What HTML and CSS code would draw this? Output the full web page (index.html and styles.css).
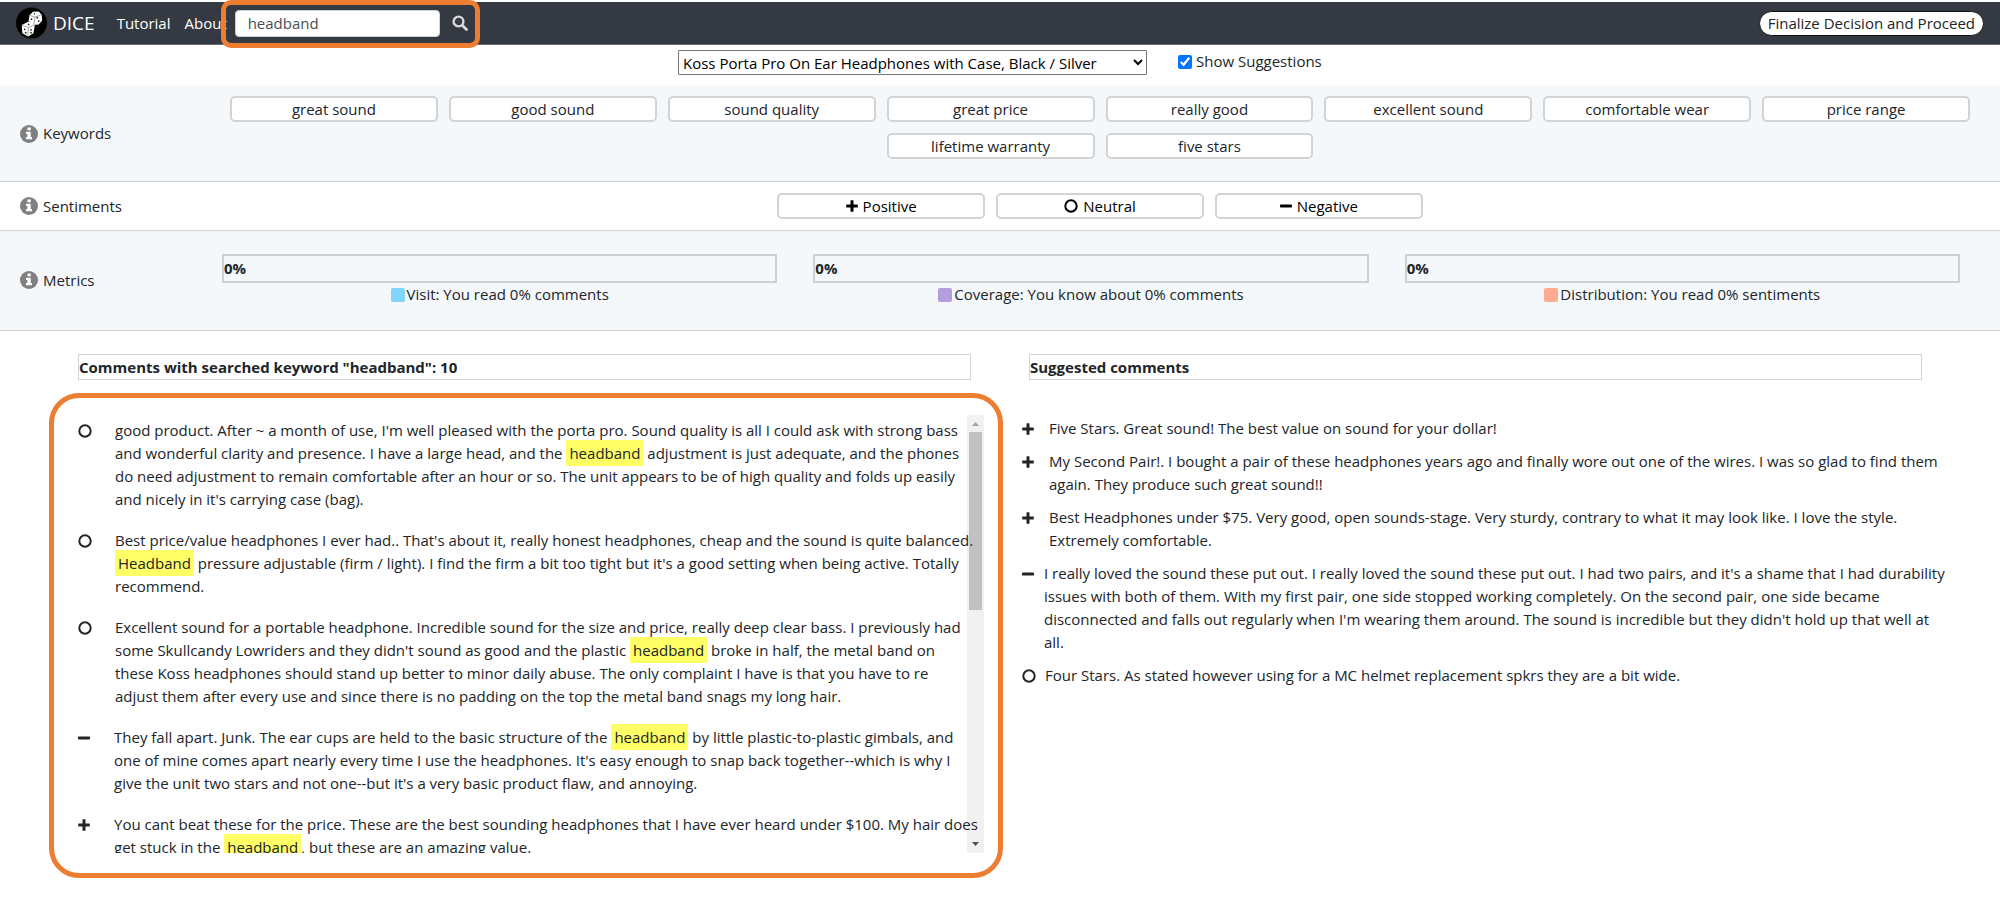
FILE: index.html
```
<!DOCTYPE html>
<html lang="en">
<head>
<meta charset="utf-8">
<title>DICE</title>
<link rel="stylesheet" href="styles.css">
</head>
<body>
<svg class="sprite" aria-hidden="true">
  <symbol id="plus" viewBox="0 0 12 12"><path d="M4.500 .8q0-.6.6-.6h1.800q.6 0 .6.6v3.700h3.700q.6 0 .6.6v1.800q0 .6-.6.6H7.500v3.700q0 .6-.6.6H5.100q-.6 0-.6-.6V7.500H.8q-.6 0-.6-.6V5.100q0-.6.6-.6h3.700z"/></symbol>
  <symbol id="minus" viewBox="0 0 12 12"><rect y="4.500" width="12" height="3" rx=".8"/></symbol>
  <symbol id="circle" viewBox="0 0 14 14"><circle cx="7" cy="7" r="5.700" fill="none" stroke="currentColor" stroke-width="2"/></symbol>
  <symbol id="info" viewBox="0 0 18 18"><circle cx="9" cy="9" r="9"/><path fill="#fff" d="M7.500 2.500h3.200v2.700H7.500zM6 6.800h4.700v5.200H12v2.200H6V12h1.400V8.900H6z"/></symbol>
</svg>

<header class="navbar">
  <a class="brand" href="#">
    <svg class="brand-logo" viewBox="0 0 32 32" aria-hidden="true">
      <circle cx="16" cy="16" r="16"/>
      <path fill="#fff" d="M14 8l3.500-3.500 6-.5 3 3.500.5 6-3.500 4-6 .5-4.500-4z"/>
      <path fill="#fff" d="M6 18l7-3.500 6.500 3-1.500 9-5.500 3.500-6-3.500z"/>
      <path fill="none" stroke="#888" stroke-width=".8" d="M14 8l5.500 2 6.500-2.500M19.500 10l-1 7.500M6 18l7 2.800 6-3.300M13 20.800L12 29"/>
      <g fill="#222"><circle cx="16" cy="12" r=".9"/><circle cx="22" cy="10.500" r=".9"/><circle cx="23.500" cy="14" r=".9"/><circle cx="19" cy="6.500" r=".8"/><circle cx="9" cy="22.500" r=".9"/><circle cx="10" cy="26" r=".9"/><circle cx="15.500" cy="23" r=".9"/><circle cx="15.500" cy="26" r=".9"/><circle cx="13" cy="17.500" r=".9"/></g>
    </svg>
    DICE
  </a>
  <nav class="nav-links">
    <a href="#">Tutorial</a>
    <a href="#">About</a>
  </nav>
  <form class="search">
    <input class="search-box" type="text" value="headband" aria-label="Search comments">
    <button class="search-button" type="button" aria-label="Search">
      <svg viewBox="0 0 16 16" aria-hidden="true"><circle cx="6.500" cy="6.500" r="4.900" fill="none" stroke="currentColor" stroke-width="2.400"/><path d="M10.200 10.200l4.300 4.300" stroke="currentColor" stroke-width="2.800" stroke-linecap="round"/></svg>
    </button>
  </form>
  <button class="finalize" type="button">Finalize Decision and Proceed</button>
</header>

<div class="product-bar">
  <select class="product" aria-label="Product">
    <option>Koss Porta Pro On Ear Headphones with Case, Black / Silver</option>
  </select>
  <label class="toggle"><input type="checkbox" checked>Show Suggestions</label>
</div>

<section class="panel panel-keywords">
  <h2 class="panel-label"><svg class="info"><use href="#info"/></svg>Keywords</h2>
  <div class="chips">
    <button class="chip" type="button">great sound</button>
    <button class="chip" type="button">good sound</button>
    <button class="chip" type="button">sound quality</button>
    <button class="chip" type="button">great price</button>
    <button class="chip" type="button">really good</button>
    <button class="chip" type="button">excellent sound</button>
    <button class="chip" type="button">comfortable wear</button>
    <button class="chip" type="button">price range</button>
    <button class="chip" type="button">lifetime warranty</button>
    <button class="chip" type="button">five stars</button>
  </div>
</section>

<section class="panel panel-sentiments">
  <h2 class="panel-label"><svg class="info"><use href="#info"/></svg>Sentiments</h2>
  <div class="chips">
    <button class="chip chip-dark" type="button"><svg class="mark"><use href="#plus"/></svg>Positive</button>
    <button class="chip chip-dark" type="button"><svg class="mark mark-circle"><use href="#circle"/></svg>Neutral</button>
    <button class="chip chip-dark" type="button"><svg class="mark"><use href="#minus"/></svg>Negative</button>
  </div>
</section>

<section class="panel panel-metrics">
  <h2 class="panel-label"><svg class="info"><use href="#info"/></svg>Metrics</h2>
  <div class="metrics">
    <div class="metric"><div class="meter">0%</div><p class="legend"><span class="swatch swatch-visit"></span>Visit: You read 0% comments</p></div>
    <div class="metric"><div class="meter">0%</div><p class="legend"><span class="swatch swatch-coverage"></span>Coverage: You know about 0% comments</p></div>
    <div class="metric"><div class="meter">0%</div><p class="legend"><span class="swatch swatch-distribution"></span>Distribution: You read 0% sentiments</p></div>
  </div>
</section>

<main class="columns">
  <section class="column">
    <h2 class="column-title">Comments with searched keyword "headband": 10</h2>
    <div class="callout">
      <div class="scroll-area">
        <div class="scrollbar" aria-hidden="true">
          <svg class="arrow arrow-up" viewBox="0 0 17 17"><path d="M5 11l3.500-4 3.500 4z"/></svg>
          <div class="track"><div class="thumb"></div></div>
          <svg class="arrow" viewBox="0 0 17 17"><path d="M5 6l3.500 4L12 6z"/></svg>
        </div>
        <ul class="results">
          <li class="comment"><svg class="mark mark-circle"><use href="#circle"/></svg><p>good product. After ~ a month of use, I'm well pleased with the porta pro. Sound quality is all I could ask with strong bass<br>and wonderful clarity and presence. I have a large head, and the <mark>headband</mark> adjustment is just adequate, and the phones<br>do need adjustment to remain comfortable after an hour or so. The unit appears to be of high quality and folds up easily<br>and nicely in it's carrying case (bag).</p></li>
          <li class="comment"><svg class="mark mark-circle"><use href="#circle"/></svg><p>Best price/value headphones I ever had.. That's about it, really honest headphones, cheap and the sound is quite balanced.<br><mark>Headband</mark> pressure adjustable (firm / light). I find the firm a bit too tight but it's a good setting when being active. Totally<br>recommend.</p></li>
          <li class="comment"><svg class="mark mark-circle"><use href="#circle"/></svg><p>Excellent sound for a portable headphone. Incredible sound for the size and price, really deep clear bass. I previously had<br>some Skullcandy Lowriders and they didn't sound as good and the plastic <mark>headband</mark> broke in half, the metal band on<br>these Koss headphones should stand up better to minor daily abuse. The only complaint I have is that you have to re<br>adjust them after every use and since there is no padding on the top the metal band snags my long hair.</p></li>
          <li class="comment"><svg class="mark"><use href="#minus"/></svg><p>They fall apart. Junk. The ear cups are held to the basic structure of the <mark>headband</mark> by little plastic-to-plastic gimbals, and<br>one of mine comes apart nearly every time I use the headphones. It's easy enough to snap back together--which is why I<br>give the unit two stars and not one--but it's a very basic product flaw, and annoying.</p></li>
          <li class="comment"><svg class="mark"><use href="#plus"/></svg><p>You cant beat these for the price. These are the best sounding headphones that I have ever heard under $100. My hair does<br>get stuck in the <mark>headband</mark>, but these are an amazing value.</p></li>
        </ul>
      </div>
    </div>
  </section>
  <section class="column">
    <h2 class="column-title">Suggested comments</h2>
    <ul class="suggestions">
      <li class="comment"><svg class="mark"><use href="#plus"/></svg><p>Five Stars. Great sound! The best value on sound for your dollar!</p></li>
      <li class="comment"><svg class="mark"><use href="#plus"/></svg><p>My Second Pair!. I bought a pair of these headphones years ago and finally wore out one of the wires. I was so glad to find them<br>again. They produce such great sound!!</p></li>
      <li class="comment"><svg class="mark"><use href="#plus"/></svg><p>Best Headphones under $75. Very good, open sounds-stage. Very sturdy, contrary to what it may look like. I love the style.<br>Extremely comfortable.</p></li>
      <li class="comment comment-tight"><svg class="mark"><use href="#minus"/></svg><p>I really loved the sound these put out. I really loved the sound these put out. I had two pairs, and it's a shame that I had durability<br>issues with both of them. With my first pair, one side stopped working completely. On the second pair, one side became<br>disconnected and falls out regularly when I'm wearing them around. The sound is incredible but they didn't hold up that well at<br>all.</p></li>
      <li class="comment comment-tight"><svg class="mark mark-circle"><use href="#circle"/></svg><p>Four Stars. As stated however using for a MC helmet replacement spkrs they are a bit wide.</p></li>
    </ul>
  </section>
</main>
</body>
</html>
```
FILE: styles.css
```
* { box-sizing: border-box; }
body {
  margin: 0;
  padding-top: 2px;
  background: #fff;
  color: #212529;
  font: 15px/23px "Segoe UI", "Open Sans", "Noto Sans", sans-serif;
}
h2, p, ul { margin: 0; padding: 0; font-size: inherit; }
ul { list-style: none; }
button, input, select { font: inherit; color: inherit; }
.sprite { position: absolute; width: 0; height: 0; }

.navbar {
  display: flex;
  align-items: center;
  height: 43px;
  padding: 0 16px;
  background: #353a42;
  border-bottom: 1px solid #6b6f75;
}
.brand { display: flex; align-items: center; gap: 6px; color: #fff; font-size: 19px; text-decoration: none; }
.brand-logo { width: 31px; height: 32px; }
.nav-links { display: flex; gap: 14px; margin-left: 22px; width: 118px; white-space: nowrap; }
.nav-links a { color: #fff; text-decoration: none; }
.search { position: relative; display: flex; align-items: center; gap: 12px; }
.search::after {
  content: "";
  position: absolute;
  inset: -10px -12px -11px -14px;
  border: 5px solid #ed7d31;
  border-radius: 10px;
  pointer-events: none;
}
.search-box {
  width: 205px;
  height: 27px;
  padding: 0 12px;
  border: 1px solid #ced4da;
  border-radius: 4px;
  background: #fff;
  color: #495057;
}
.search-button { display: flex; padding: 0; border: 0; background: none; color: #d8dadd; }
.search-button svg { width: 16px; height: 16px; }
.finalize {
  margin-left: auto;
  height: 25px;
  padding: 0 8px;
  border: 1px solid #111;
  border-radius: 13px;
  background: #fff;
  line-height: 22px;
}

.product-bar { display: flex; gap: 31px; align-items: flex-start; height: 40px; padding: 5px 0 0 33.9%; }
.product { width: 469px; height: 25px; padding: 0; border: 1px solid #767676; border-radius: 1px; background: #fff; color: #000; }
.toggle { display: flex; align-items: center; gap: 4px; }
.toggle input { width: 14px; height: 14px; margin: 0; accent-color: #0075ff; }

.panel { display: grid; grid-template-columns: 222px 1fr; align-items: center; border-bottom: 1px solid #d0d3d5; }
.panel-label { display: flex; align-items: center; gap: 5px; padding-left: 20px; font-weight: 400; }
.info { width: 18px; height: 18px; fill: #808080; }
.panel-keywords { padding: 11px 30px 22px 0; background: #f4f8fb; }
.panel-keywords .panel-label { padding-top: 12px; }
.panel-sentiments { padding: 11px 30px 11px 0; }
.panel-metrics { padding: 23px 40px 24px 0; background: #f4f8fb; }
.chips { display: flex; flex-wrap: wrap; justify-content: center; gap: 11px; padding-left: 8px; }
.chip {
  display: flex;
  align-items: center;
  justify-content: center;
  gap: 5px;
  width: calc((100% - 77px) / 8);
  height: 26px;
  padding: 0;
  border: 2px solid #d3d3d3;
  border-radius: 5px;
  background: #fff;
  line-height: 22px;
}
.chip-dark { color: #000; }
.mark { flex: none; width: 12px; height: 12px; fill: currentColor; }
.mark-circle { width: 14px; height: 14px; }

.metrics { display: grid; grid-template-columns: repeat(3, 1fr); gap: 36px; }
.meter { height: 29px; border: 2px solid #d0d0d0; font-weight: 700; line-height: 24px; }
.legend { display: flex; align-items: center; justify-content: center; gap: 2px; }
.swatch { width: 14px; height: 14px; border-radius: 2px; }
.swatch-visit { background: #81d4fa; }
.swatch-coverage { background: #b39ddb; }
.swatch-distribution { background: #ffab91; }

.columns { display: grid; grid-template-columns: 1fr 1fr; gap: 58px; padding: 23px 78px 0; }
.column { min-width: 0; }
.column-title { height: 26px; border: 1px solid #d3d3d3; font-weight: 700; line-height: 24px; }
.callout { margin: 13px -32px 0 -29px; padding: 17px 14px 20px 24px; border: 5px solid #ed7d31; border-radius: 30px; }
.scroll-area { position: relative; }
.results { position: relative; height: 438px; padding-top: 4px; overflow: hidden; }
.scrollbar {
  position: absolute;
  inset: 0 0 0 auto;
  display: flex;
  flex-direction: column;
  width: 17px;
  background: #f1f1f1;
}
.arrow { height: 17px; fill: #505050; }
.arrow-up { fill: #a3a3a3; }
.track { flex: 1; padding: 0 2px; }
.thumb { height: 44%; background: #c1c1c1; }
.comment { display: flex; gap: 14px; white-space: nowrap; }
.comment .mark { margin: 6px 1px 0 0; }
.comment .mark-circle { margin: 5px 0 0; }
.results .comment { gap: 23px; margin-bottom: 18px; }
.suggestions { margin: 37px 0 0 -7px; }
.suggestions .comment { margin-bottom: 10px; }
.suggestions .comment-tight { gap: 9px; }
mark { padding: 3px; background: #ff6; color: inherit; }
```
